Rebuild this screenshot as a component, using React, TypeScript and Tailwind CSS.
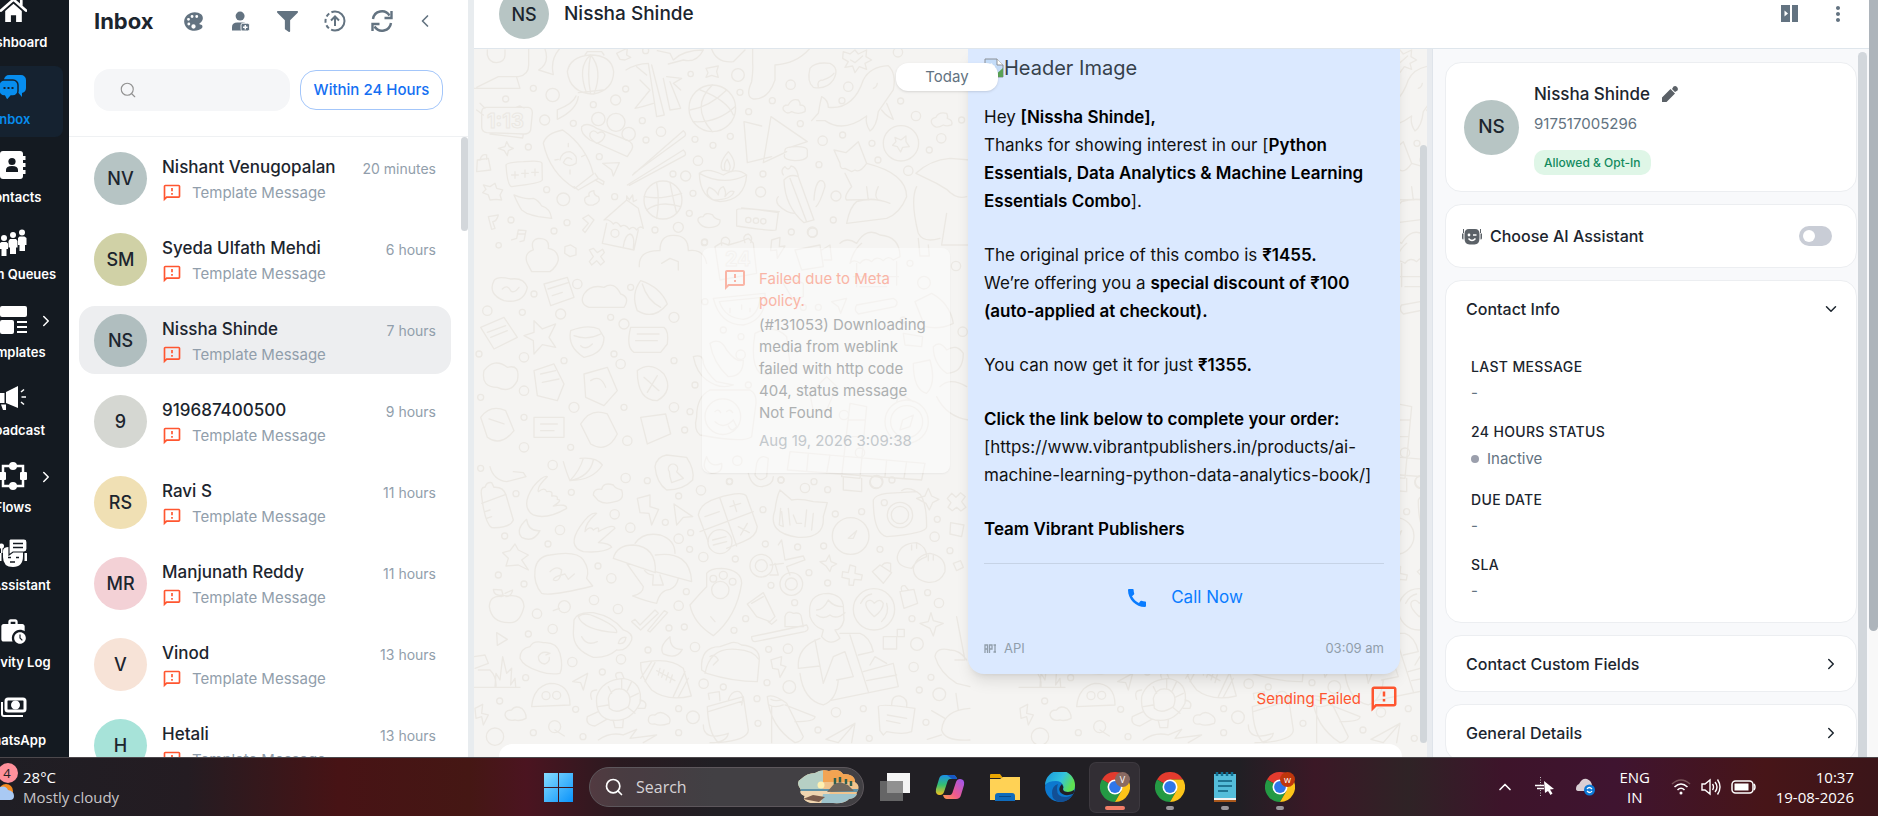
import { useState } from 'react';
import type { ReactNode } from 'react';
import { FaFilter } from 'react-icons/fa';
import { MdCall, MdOutlineFeedback, MdWorkHistory, MdMoreVert } from 'react-icons/md';
import { IoColorPalette } from 'react-icons/io5';
import { ChevronDown, ChevronLeft, ChevronRight, ChevronUp, Search } from 'lucide-react';

type Chat = { name: string; initials: string; time: string; color: string };

const chats: Chat[] = [
  { name: 'Nishant Venugopalan', initials: 'NV', time: '20 minutes', color: 'bg-[#b6c4c4]' },
  { name: 'Syeda Ulfath Mehdi', initials: 'SM', time: '6 hours', color: 'bg-[#d0d1a6]' },
  { name: 'Nissha Shinde', initials: 'NS', time: '7 hours', color: 'bg-[#b0bebf]' },
  { name: '919687400500', initials: '9', time: '9 hours', color: 'bg-[#d5d7d2]' },
  { name: 'Ravi S', initials: 'RS', time: '11 hours', color: 'bg-[#f0e0b4]' },
  { name: 'Manjunath Reddy', initials: 'MR', time: '11 hours', color: 'bg-[#f3d1d6]' },
  { name: 'Vinod', initials: 'V', time: '13 hours', color: 'bg-[#f7e3d7]' },
  { name: 'Hetali', initials: 'H', time: '13 hours', color: 'bg-[#a7e3d9]' },
];

const HomeIcon = () => (
  <svg viewBox="0 0 26 26" className="w-[27px] h-[27px]" fill="currentColor">
    <path d="M5 13.500 13 6.500l8 7V24h-5.500v-6.500h-5V24H5z" />
    <path d="M1 13 13 2.500 25 13M20.500 3.500v5" fill="none" stroke="currentColor" strokeWidth="2.600" strokeLinecap="round" />
  </svg>
);

const ChatIcon = () => (
  <svg viewBox="0 0 28 28" className="w-[28px] h-[28px]" fill="currentColor">
    <path d="M10 1h12a5 5 0 0 1 5 5v8a5 5 0 0 1-4 4.900V23l-3.500-4H10a5 5 0 0 1-5-5V6a5 5 0 0 1 5-5z" />
    <path d="M5 6h9a5 5 0 0 1 5 5v6a5 5 0 0 1-5 5h-2l-4 4.500L5.500 22H5a5 5 0 0 1-5-5v-6a5 5 0 0 1 5-5z" stroke="#152230" strokeWidth="1.500" />
    <path d="M4.500 13h2v2h-2zM8.500 13h2v2h-2zM12.500 13h2v2h-2z" fill="#152230" />
  </svg>
);

const ContactsIcon = () => (
  <svg viewBox="0 0 26 28" className="w-[26px] h-[28px]" fill="currentColor">
    <rect x="0" y="0" width="23" height="28" rx="3" />
    <path d="M23 5h2.500v4H23zM23 12h2.500v4H23zM23 19h2.500v4H23z" />
    <circle cx="12" cy="10.500" r="3.600" fill="#141a21" />
    <path d="M6 21v-2q0-4 6-4t6 4v2z" fill="#141a21" />
  </svg>
);

const QueueIcon = () => (
  <svg viewBox="0 0 28 28" className="w-[28px] h-[28px]" fill="currentColor">
    <circle cx="5" cy="9" r="3" /><circle cx="14" cy="6" r="3" /><circle cx="23" cy="3.500" r="3" />
    <path d="M2.500 13h5l1.500 1.500V20H7.500v7h-5v-7H0v-5.500zM11 10h6l1.500 2v6.500H17V25h-6v-6.500H9.500V12zM20.500 7.500h5L27.500 9v7H26v6h-5.500v-6H19V9z" />
  </svg>
);

const TemplateIcon = () => (
  <svg viewBox="0 0 27 28" className="w-[27px] h-[28px]" fill="currentColor">
    <rect width="27" height="11" rx="2" /><rect y="14" width="14" height="14" rx="2" />
    <path d="M17 15h10v2H17zM17 20h10v2H17zM17 25h10v2H17z" />
  </svg>
);

const MegaphoneIcon = () => (
  <svg viewBox="0 0 28 24" className="w-[28px] h-[24px]" fill="currentColor">
    <path d="M7 6 19 0v22L7 17zM0 7h5.500v10H0zM2 18.500h5V24H4z" />
    <path d="m22 6 3-2.500M22.500 11H27M22 16l3 2.500" stroke="currentColor" strokeWidth="1.600" />
  </svg>
);

const FlowIcon = () => (
  <svg viewBox="0 0 28 28" className="w-[28px] h-[28px]" fill="currentColor">
    <rect x="4" y="4" width="20" height="20" fill="none" stroke="currentColor" strokeWidth="2.500" />
    <circle cx="14" cy="4" r="4" /><circle cx="14" cy="24" r="4" />
    <rect x="0" y="10" width="7" height="8" rx="1" /><rect x="21" y="10" width="7" height="8" rx="1" />
  </svg>
);

const AssistantIcon = () => (
  <svg viewBox="0 0 28 28" className="w-[28px] h-[28px]" fill="currentColor">
    <path d="M4 12q0-4 6-4h14v9q0 11-10 11T4 18zM0 14h2.500v8H0zM25.500 14H28v8h-2.500z" />
    <circle cx="2.500" cy="7" r="2.500" /><path d="M2 8h1.500v6H2z" />
    <path d="M11 0h14a3 3 0 0 1 3 3v7a3 3 0 0 1-3 3H14l-4 3V1z" stroke="#141a21" strokeWidth="1.200" />
    <path d="M14 4.500h10M14 8.500h10M9 18.500h3M17 18.500h3M11 23h5" stroke="#141a21" strokeWidth="1.500" />
  </svg>
);

const PaymentsIcon = () => (
  <svg viewBox="0 0 27 22" className="w-[27px] h-[22px]" fill="none" stroke="currentColor" strokeWidth="2">
    <rect x="6" y="2" width="19" height="12" rx="2" strokeWidth="3" /><circle cx="15.500" cy="8" r="3.500" fill="currentColor" />
    <path d="M2 5v12q0 2 2 2h19" />
  </svg>
);

const menu: { label: string; icon: ReactNode; active?: boolean; sub?: boolean }[] = [
  { label: 'Dashboard', icon: <HomeIcon /> },
  { label: 'Inbox', icon: <ChatIcon />, active: true },
  { label: 'Contacts', icon: <ContactsIcon /> },
  { label: 'Team Queues', icon: <QueueIcon /> },
  { label: 'Templates', icon: <TemplateIcon />, sub: true },
  { label: 'Broadcast', icon: <MegaphoneIcon /> },
  { label: 'Flows', icon: <FlowIcon />, sub: true },
  { label: 'AI Assistant', icon: <AssistantIcon /> },
  { label: 'Activity Log', icon: <MdWorkHistory className="w-[28px] h-[28px]" /> },
  { label: 'WhatsApp', icon: <PaymentsIcon /> },
];

const Sidebar = () => (
  <aside className="flex justify-end w-[69px] shrink-0 overflow-hidden bg-[#141a21] pr-1.5">
    <nav className="flex flex-col gap-1.5 w-[100px] h-[770px] shrink-0 -mt-3">
      {menu.map((item) => (
        <a
          key={item.label}
          href="#"
          className={`relative flex flex-1 flex-col items-center justify-between rounded-lg pt-1.5 pb-2 ${
            item.active ? 'bg-[#152230] text-[#078dee]' : 'text-white'
          }`}
        >
          <span className="flex items-center h-8">{item.icon}</span>
          <span className="text-[13px] leading-5 font-semibold whitespace-nowrap">{item.label}</span>
          {item.sub && <ChevronRight className="absolute right-2 top-3.5 w-[18px] h-[18px]" />}
        </a>
      ))}
    </nav>
  </aside>
);

const UserAddIcon = () => (
  <svg viewBox="0 0 20 22" className="w-[18px] h-[21px]" fill="currentColor">
    <circle cx="9" cy="5" r="5" /><path d="M0 21v-4q0-5 6-5h6q5 0 6 4v5z" />
    <rect x="10" y="13" width="9.500" height="8.500" rx="2" stroke="#fff" />
    <path d="M14.750 14.800v5M12.250 17.300h5" stroke="#fff" strokeWidth="1.600" />
  </svg>
);

const UploadIcon = () => (
  <svg viewBox="0 0 22 22" className="w-[22px] h-[22px]" fill="none" stroke="currentColor" strokeWidth="2">
    <path d="M11 1.500a9.500 9.500 0 0 1 0 19" /><path d="M11 20.500a9.500 9.500 0 0 1 0-19" strokeDasharray="4 2.500" />
    <path d="M11 16V6.500M7 10.500l4-4 4 4" />
  </svg>
);

const RefreshIcon = () => (
  <svg viewBox="0 0 22 22" className="w-[22px] h-[22px]" fill="none" stroke="currentColor" strokeWidth="2.400">
    <path d="M2 9a9 9 0 0 1 16.500-3.500M20 13A9 9 0 0 1 3.500 16.500" />
    <path d="M20.500 1v7h-7M1.500 21v-7h7" />
  </svg>
);

const tools = [
  { label: 'Theme', icon: <IoColorPalette className="w-[23px] h-[23px]" /> },
  { label: 'Assign', icon: <UserAddIcon /> },
  { label: 'Filter', icon: <FaFilter className="w-[21px] h-[21px]" /> },
  { label: 'Upload', icon: <UploadIcon /> },
  { label: 'Refresh', icon: <RefreshIcon /> },
];

const InboxPanel = ({ selected, onSelect }: { selected: string; onSelect: (name: string) => void }) => (
  <section className="flex flex-col w-[399px] shrink-0 bg-white">
    <div className="h-[137px] shrink-0 border-b border-[#eff1f3]">
      <div className="flex items-center h-[42px] pl-[25px] text-[#637381]">
        <h1 className="text-[22px] leading-7 font-bold text-[#1c252e] w-[76px]">Inbox</h1>
        {tools.map((tool) => (
          <button key={tool.label} aria-label={tool.label} className="flex justify-center w-[47px]">{tool.icon}</button>
        ))}
        <button aria-label="Collapse" className="flex justify-center w-10"><ChevronLeft className="w-[20px] h-[20px]" /></button>
      </div>
      <div className="flex items-center gap-2.5 pl-[25px] pr-[25px] pt-[27px]">
        <label className="flex flex-1 min-w-0 items-center h-[42px] rounded-2xl bg-[#f5f6f8] pl-[25px] text-[#919191]">
          <Search className="w-[18px] h-[18px] shrink-0" strokeWidth={1.5} />
          <input aria-label="Search chats" className="w-full min-w-0 bg-transparent outline-none px-2" />
        </label>
        <button className="h-10 w-[143px] rounded-2xl border border-[#a3c6fa] text-[15px] font-medium text-[#146ff2]">
          Within 24 Hours
        </button>
      </div>
    </div>
    <div className="flex flex-1 min-h-0 justify-between">
      <ul className="flex flex-col gap-[13px] flex-1 min-w-0 overflow-hidden pt-[7px] pl-2.5 pr-2.5">
        {chats.map((chat) => (
          <li key={chat.name} className="shrink-0">
            <button
              onClick={() => onSelect(chat.name)}
              className={`flex items-center w-full h-[68px] rounded-2xl px-[15px] text-left ${
                chat.name === selected ? 'bg-[#edeef0]' : ''
              }`}
            >
              <span
                className={`flex items-center justify-center w-[53px] h-[53px] shrink-0 rounded-full text-[18px] font-medium text-[#1c252e] ${chat.color}`}
              >
                {chat.initials}
              </span>
              <span className="flex flex-col flex-1 ml-[15px] pt-1 gap-0.5 min-w-0">
                <span className="flex items-center justify-between">
                  <span className="text-[17px] leading-6 font-medium text-[#1c252e]">{chat.name}</span>
                  <span className="text-[14px] leading-5 pt-1 text-[#919eab]">{chat.time}</span>
                </span>
                <span className="flex items-center gap-2.5 text-[15px] leading-6 text-[#919eab]">
                  <MdOutlineFeedback className="w-5 h-5 text-[#ff5630]" />
                  Template Message
                </span>
              </span>
            </button>
          </li>
        ))}
      </ul>
      <div className="w-[7px] h-[94px] rounded-full bg-[#d3d7db]" />
    </div>
  </section>
);

const dots1 = [
  [248, 285, 20], [190, 265, 9], [107, 297, 9], [437, 300, 15], [467, 267, 9], [370, 314, 9], [224, 360, 15], [310, 370, 9],
  [527, 152, 9], [662, 222, 8], [804, 225, 19], [810, 277, 9], [836, 335, 9], [907, 302, 9], [962, 254, 14], [1135, 260, 14],
  [1284, 157, 14], [1116, 302, 9], [1292, 303, 9], [1338, 348, 14], [991, 371, 9], [1058, 422, 14], [1118, 405, 9],
  [1206, 430, 9], [1414, 415, 14], [1378, 450, 9], [1475, 360, 9], [573, 395, 14], [528, 420, 9], [517, 362, 9], [675, 418, 9],
  [729, 436, 9], [781, 409, 9], [684, 482, 14], [388, 470, 9], [175, 441, 9], [609, 522, 9], [647, 528, 15], [669, 580, 9],
  [879, 522, 9], [872, 576, 15], [1047, 494, 9], [1098, 588, 15], [1224, 480, 9], [1315, 512, 14], [1090, 660, 9],
  [434, 590, 9], [280, 598, 19], [230, 569, 9], [123, 660, 9], [291, 668, 9], [252, 693, 9], [555, 690, 9], [625, 682, 15],
  [658, 640, 9], [964, 696, 9], [1027, 696, 15], [86, 736, 8], [704, 726, 9], [727, 325, 70], [579, 600, 57], [1293, 430, 53],
  [385, 357, 20], [438, 367, 27], [476, 402, 20], [435, 700, 12], [835, 660, 8], [858, 662, 8], [880, 664, 8],
];

const shapes1 = [
  'M12 265H150L140 232M176 147V195Q176 225 145 230H85L20 262M52 150V165Q58 188 80 188Q105 185 105 165V150',
  'M225 147Q240 190 206 210L250 224Q240 180 268 147',
  'M292 215Q300 170 360 165Q425 165 431 215Q430 270 370 282Q300 280 292 215ZM362 165Q320 200 350 280M362 165Q350 220 362 282M362 165Q400 210 372 282M345 165L352 155H395L402 165M325 278L400 270M325 290Q320 330 262 358Q262 345 262 330Q310 310 318 288',
  'M440 160L460 150 472 145 470 165 482 172 465 180 450 178ZM562 152L600 160 610 180Q640 150 700 150Q680 190 640 180L595 192',
  'M725 147Q740 190 790 185L825 150M848 147V190Q850 210 845 245Q825 290 850 297Q895 300 915 240V195Q980 190 1018 147',
  'M468 210Q500 190 535 190L560 350 583 345 545 195M500 200L530 225M510 240L540 270L495 325Q520 320 550 310M590 230L635 235 610 250 632 270M580 235L600 330 632 325 600 245',
  'M708 205L745 198 740 215 745 232 725 226 708 232 714 218Z',
  'M727 255Q660 320 727 395M690 270Q770 300 790 345M660 330Q720 320 770 270M670 365Q740 370 795 320',
  'M48 322H175Q188 325 187 340L182 390Q178 403 160 402L50 398Q35 395 35 380V335Q37 322 48 322ZM60 402L158 414 160 402M20 330L40 345M30 310L45 325M137 322L150 318 162 324',
  'M335 380Q350 365 380 385L470 420Q495 430 485 450L472 470 360 420Q330 400 335 380ZM380 430Q355 415 360 400Q370 385 383 400Q400 390 405 405Q400 425 380 430Z',
  'M220 430Q228 400 278 390Q350 440 370 522L315 565Q240 520 220 430ZM312 560L325 570 385 535 375 520M375 540L400 554 402 545 385 535',
  'M472 555L640 450Q650 460 645 466L478 556M488 525L640 392Q650 400 645 408L492 520',
  'M270 480Q275 455 300 455Q325 465 318 490Q295 505 280 488Q290 465 305 478M295 440V430M335 470L345 465M255 480L265 478M300 510V522',
  'M688 520Q690 598 750 605Q825 600 830 525Q760 560 688 520Q710 500 760 525Q800 500 830 525M757 510Q745 490 775 455Q805 490 785 515ZM765 510Q760 490 772 478Q785 500 778 510M730 600Q700 580 718 562Q735 568 745 585Q745 565 760 560Q770 575 765 590Q780 568 792 575Q785 600 730 600Z',
  'M822 365L875 378M822 365L832 488 905 470M903 350L880 488Q920 470 950 455M903 350L1012 425 960 442M945 450Q945 440 980 440Q1012 440 1012 450V470Q1005 482 975 482Q945 480 943 470Z',
  'M942 540Q960 520 985 530L1032 660 1002 668Q945 620 942 540ZM960 535L1010 665M1032 600Q1035 550 1050 542Q1065 540 1065 560Q1050 610 1038 620M925 590Q915 600 925 615Q950 640 975 640M940 525Q930 510 945 500Q955 515 963 498Q980 500 985 528',
  'M1025 362L1045 340Q1050 310 1055 290Q1075 300 1075 322Q1150 330 1180 240Q1200 200 1255 197Q1280 220 1270 270L1225 335Q1220 380 1200 393Q1185 370 1190 348Q1120 400 1065 362L1040 362M1250 310L1270 358Q1250 350 1235 330M1210 265Q1220 262 1222 250',
  'M1092 450L1128 458 1165 425 1190 490Q1170 520 1155 510L1145 515 1125 505Q1110 510 1110 490ZM1125 520L1145 560Q1120 590 1130 600L1215 598M1190 490Q1310 520 1310 590Q1290 640 1250 655L1130 670Q1140 620 1160 605Q1210 590 1260 610M1190 560L1195 600M1225 560Q1210 590 1225 600',
  'M1020 205Q1035 185 1080 190Q1110 205 1090 240Q1070 270 1030 262Q1010 245 1020 205ZM1045 260Q1040 240 1060 240Q1085 230 1092 220',
  'M1120 155L1140 162 1155 150 1165 162 1190 150 1188 170 1205 180 1185 190 1190 208 1168 200 1155 218 1148 198 1125 202 1135 185 1118 175ZM1142 180L1155 188 1178 168',
  'M1275 412L1293 420 1308 408 1308 425 1318 440 1298 442 1292 456 1282 440 1268 436 1278 425Z',
  'M940 330Q935 315 955 315Q965 295 985 300Q992 310 990 315Q1010 315 1005 335Q985 345 965 335Q950 345 940 330ZM1385 370Q1380 355 1398 352Q1405 335 1430 340Q1435 350 1432 355Q1450 360 1445 375Q1430 380 1420 375Q1395 390 1385 370Z',
  'M108 495Q108 488 160 485Q215 480 216 490L217 540Q215 550 125 560Q112 558 108 495ZM125 525H145M135 515V535M155 520H175M165 510V532M185 517H205M195 507V527',
  'M85 445L105 440 110 425 118 440 130 445 115 452 112 467 103 452ZM22 480L55 475 62 510 20 515ZM30 480Q35 460 50 465V478M398 490L448 488 430 528 425 510Z',
  'M40 555L60 560 75 550 80 565 98 570 90 585 95 600 78 598 60 600 55 585 38 578 48 568ZM132 585Q145 615 155 630L170 640 185 645 205 650 245 655Q240 625 215 618Q205 600 190 595Q165 600 132 585ZM345 605Q340 590 358 588Q352 575 372 572Q370 585 385 590Q395 605 370 615Q350 618 345 605Z',
  'M402 660L470 600 505 625 520 685Q510 675 500 690Q490 675 478 688Q465 670 452 680Q440 660 430 672Q415 655 402 660ZM410 670L397 730 492 750 505 690M460 740Q465 705 480 702Q495 705 490 745M470 600V588L478 600 488 585 490 605 500 600',
  'M523 590Q570 600 635 580M560 548Q570 600 560 655M600 547Q610 600 620 640M530 630Q570 600 632 620',
  'M800 630Q805 620 925 638L918 690Q910 695 800 678ZM815 624L928 635M685 665Q680 650 700 650Q705 635 728 645Q732 655 750 660Q752 675 735 680Q700 690 685 665Z',
  'M55 650L85 645Q80 665 68 665L75 685 65 688ZM338 655L355 645 372 660 345 698 338 690 355 670ZM125 720L140 715 145 690 168 692 162 722 150 725M142 702H165',
  'M285 740L302 735 318 745V765L300 770 284 760ZM358 750L370 745 382 758 398 748 403 758 392 770 403 785 392 795 380 782 365 795 358 785 370 770ZM172 790Q160 760 190 750Q180 720 205 715Q240 715 235 745Q265 750 265 780Q260 800 240 815H185Z',
  'M508 800Q505 750 570 752Q570 705 610 706Q655 705 655 752Q700 745 710 790M575 790L600 775 625 785V810',
  'M1338 520Q1380 480 1440 475L1500 480M1338 520L1400 550 1430 568Q1460 600 1490 590M1340 560Q1320 600 1345 700Q1360 730 1410 715M1430 640L1415 735H1500M1345 715L1350 768H1378L1375 735',
];

const shapesMid = [
  'M60 20Q40 60 90 80Q150 90 160 40Q150 10 110 15Q70 5 60 20ZM85 45Q100 30 110 50Q120 60 135 40',
  'M210 30L280 10 300 70 230 95ZM222 45L285 25M235 65L265 55',
  'M330 60Q350 30 390 40Q420 20 440 60Q470 70 450 100H345Q315 90 330 60Z',
  'M500 20Q560 40 580 90Q540 140 490 110Q470 60 500 20ZM505 30Q520 80 560 100',
  'M20 160L90 130 130 190 60 225ZM40 175L95 155M50 190L100 170',
  'M180 140L205 165 245 150 225 190 245 220 205 212 180 240 178 200 150 185 180 175Z',
  'M290 170Q280 220 330 250Q390 240 390 190L375 165Q340 150 290 170ZM300 185Q340 200 380 180M320 215Q335 230 355 210',
  'M470 160H570Q585 170 580 210L560 235H480Q455 220 470 160ZM490 180H555M485 200H550',
  'M30 290Q60 250 100 280Q140 270 130 320Q110 360 70 340Q20 340 30 290Z',
  'M180 290L240 270 270 330 250 380 190 365ZM200 300L245 290M205 325L255 315',
  'M330 300L400 280 430 350 390 395 335 370ZM350 320Q380 300 395 340',
  'M490 290Q530 260 570 300Q600 350 550 380Q490 380 490 290ZM510 310L555 350M550 305L520 355',
  'M20 430Q50 390 95 410L120 470Q80 520 40 490ZM45 435L90 450M180 430H270V490H180ZM200 450H250M200 470H240',
  'M320 450Q350 400 400 420L430 480Q400 540 350 510ZM500 430L575 420 590 480 520 510Z',
];

const dotsMid = [
  [180, 60, 9], [310, 30, 14], [470, 40, 9], [40, 110, 14], [145, 115, 9], [260, 120, 15], [410, 130, 9], [450, 150, 15],
  [15, 240, 9], [150, 250, 14], [270, 260, 9], [420, 240, 9], [440, 270, 14], [600, 260, 9], [150, 350, 14], [20, 370, 9],
  [300, 400, 15], [450, 400, 9], [600, 400, 14], [150, 430, 9], [150, 520, 14], [290, 520, 9], [460, 500, 14], [600, 130, 15],
];

const shapesCard = [
  'M105 50L125 38 145 45 180 35 205 25 220 40 230 130 120 150ZM125 45Q120 20 140 22Q155 30 145 45M195 38Q185 15 205 12Q220 20 212 38',
  'M275 30L300 22 298 50 315 48 292 85 290 60 272 62ZM345 60L420 45 430 110 365 120ZM425 60L450 45 455 90 432 90M480 40Q500 20 530 40Q560 -10 600 15Q660 20 660 80L640 90Q625 75 610 92Q590 75 575 95Q555 80 540 100Q520 85 510 100Q520 60 545 40M530 100V170M650 95V165M520 140H655M540 170H620',
  'M100 205L255 190Q260 270 190 285Q120 285 100 205ZM118 215L240 203Q235 262 190 268Q135 265 118 215ZM150 235V248M185 225V238M210 235V245M455 215L500 205 482 250 475 230Z',
  'M530 225L640 205Q660 215 645 230L535 252Q520 240 530 225ZM705 215L755 190Q810 220 820 280Q780 300 735 290ZM310 160Q330 140 370 160V200L340 210Z',
  'M40 380Q70 370 70 400Q80 430 110 455L160 465Q120 480 80 450Q50 430 40 380ZM90 340Q120 320 140 360Q170 400 190 390Q190 440 145 440Q100 400 90 340ZM225 310Q280 280 320 320L330 400Q300 440 240 430Q210 400 225 310ZM670 310L728 320 725 350 675 345Z',
  'M90 480H210Q230 490 228 520L215 620Q190 640 60 615Q40 600 50 560Q50 500 90 480ZM75 560A50 50 0 1 0 182 560A50 50 0 1 0 75 560ZM105 545Q115 535 122 548M140 545Q150 535 158 548M105 575Q130 600 160 570L170 590Q155 610 145 588',
  'M330 665L735 700 725 750 322 720ZM385 670L380 725M450 675L440 730M510 520L560 530 540 745 485 740ZM505 570H555M500 620H550M490 740V780L545 785V745M620 690L615 740M680 695L672 745',
  'M390 490L440 440 470 470 440 540 400 545ZM615 575A65 65 0 1 0 745 575A65 65 0 1 0 615 575ZM632 575A48 48 0 1 0 728 575A48 48 0 1 0 632 575ZM700 555L690 590 660 600 668 570ZM650 515Q655 495 675 500L700 515',
  'M760 350Q780 330 800 360Q830 340 850 370Q850 430 800 430Q760 400 760 350ZM700 400L750 390Q770 460 740 490Q700 480 700 400ZM780 470Q810 440 860 470M770 500Q800 560 865 570M80 680Q60 720 95 730Q130 730 125 700Q90 715 80 680ZM230 700Q240 670 265 685L260 740Q240 760 225 735ZM205 730Q215 770 245 770Q280 765 280 740',
];

const dotsCard = [
  [73, 38, 9], [398, 8, 14], [828, 108, 14], [690, 100, 9], [732, 158, 19], [670, 270, 9], [75, 215, 9], [130, 300, 9],
  [183, 320, 9], [182, 374, 14], [45, 465, 9], [205, 465, 9], [14, 600, 9], [30, 545, 9], [492, 555, 14], [540, 668, 14],
  [172, 692, 14], [303, 750, 9], [402, 755, 9], [590, 755, 19], [148, 755, 9], [848, 305, 14], [370, 232, 9], [415, 232, 9],
];

const dots3 = [
  [248, 15, 14], [32, 25, 9], [467, 54, 14], [532, 62, 9], [138, 101, 9], [304, 97, 9], [626, 108, 9], [693, 91, 14],
  [779, 64, 9], [933, 60, 9], [1005, 84, 14], [1073, 89, 9], [1218, 67, 19], [1266, 60, 9], [434, 163, 14], [586, 187, 9],
  [481, 203, 14], [270, 210, 14], [104, 228, 9], [234, 252, 9], [626, 236, 14], [662, 218, 9], [659, 268, 9], [700, 291, 14],
  [796, 297, 9], [879, 149, 9], [886, 252, 9], [983, 261, 9], [1096, 162, 9], [1175, 155, 9], [1243, 128, 9], [1402, 178, 9],
  [1394, 230, 14], [1061, 258, 9], [1230, 268, 9], [1440, 272, 9], [1017, 338, 9], [1073, 369, 9], [903, 376, 9],
  [384, 318, 9], [424, 355, 14], [162, 372, 9], [85, 345, 9], [372, 420, 14], [444, 447, 14], [283, 440, 18], [201, 461, 14],
  [626, 437, 14], [649, 395, 9], [597, 504, 9], [643, 501, 9], [792, 511, 9], [827, 476, 9], [974, 428, 9], [1373, 398, 9],
  [1407, 429, 14], [1326, 476, 9], [248, 507, 14], [175, 522, 9], [534, 570, 9], [675, 561, 14], [307, 606, 14],
  [453, 598, 14], [397, 636, 9], [167, 653, 9], [896, 568, 9], [954, 566, 14], [891, 668, 9], [958, 681, 19], [1341, 552, 19],
  [1331, 621, 14], [1383, 652, 9], [1348, 690, 9], [1408, 703, 19], [701, 671, 14], [760, 681, 9], [89, 723, 9],
  [317, 748, 9], [626, 746, 9], [669, 772, 19], [861, 716, 9], [864, 790, 9], [1098, 757, 14], [1180, 746, 9], [1044, 810, 9],
  [1368, 787, 9], [190, 818, 9], [339, 830, 9], [254, 800, 18], [626, 818, 9], [75, 830, 26], [1198, 835, 9],
  [1290, 165, 38], [1290, 165, 26], [1142, 228, 55], [1212, 448, 62], [874, 317, 34], [874, 317, 18], [964, 372, 34],
  [964, 372, 18], [751, 390, 26], [730, 356, 10], [760, 346, 12], [788, 365, 10], [228, 707, 12], [260, 706, 12], [750, 245, 36],
];

const shapes3 = [
  'M60 20Q70 60 110 65L168 50 160 38 130 35M280 5Q290 40 300 62Q370 60 397 15Q380 -10 330 -5M300 62Q330 30 340 -5M300 62Q360 50 370 0',
  'M555 20Q560 -10 590 -15L650 -8Q675 30 668 60Q640 90 590 90Q560 70 555 20ZM600 50L598 35A14 14 0 1 1 620 35L640 55 605 68Z',
  'M35 110Q30 80 45 82Q50 65 65 68L72 82Q100 80 108 105L130 180Q120 205 65 203Q45 190 35 110ZM35 130L108 103M45 155L60 150M50 175L65 170',
  'M232 50Q220 45 190 80Q150 140 190 165Q230 180 290 145Q290 130 250 138Q280 120 262 118Q265 105 245 108Q250 90 230 95Q225 80 205 95Q200 80 232 50Z',
  'M380 160Q360 155 330 200Q290 260 340 275Q400 280 425 262Q420 250 385 248L435 205Q430 190 385 215Q390 195 370 210Q360 195 345 215Q345 190 380 160Z',
  'M370 105Q370 85 395 88Q400 65 430 75Q435 85 455 90Q465 120 435 125Q405 135 385 122ZM105 765Q105 750 125 750Q135 735 155 745Q170 760 168 775Q150 785 135 780Q110 785 105 765ZM535 780Q535 762 555 765Q570 750 590 765Q605 775 598 790Q570 800 555 792Q535 795 535 780Z',
  'M502 115L540 105 540 140 566 148 545 195 537 160 510 158ZM612 132L668 170 640 172 620 195ZM903 600L935 590 932 615 948 620 930 652 925 628 908 625ZM15 745L38 733 35 760 55 765 40 795 35 770 18 775Z',
  'M170 178Q135 210 155 232Q190 250 210 212Q175 215 170 178ZM600 530Q565 560 580 582Q620 600 637 568Q600 570 600 530Z',
  'M98 278L120 272 135 252 145 270 175 285 155 300 175 330 145 315 108 318 115 295ZM80 518L112 538 82 556Z',
  'M195 330Q200 290 240 285Q320 270 340 300Q360 330 350 355L368 378Q240 410 215 400Q190 370 195 330ZM240 335Q260 315 275 330Q270 370 250 360Q250 350 285 342L295 358 313 342',
  'M430 295Q440 255 490 255Q560 260 556 338ZM495 250Q520 215 570 225Q615 240 615 280M556 285Q660 270 665 365L556 335M470 310L520 380Q520 400 488 408Q530 425 560 430Q570 390 600 388Q620 380 625 355M520 325Q530 345 550 345L548 375 580 375 570 345',
  'M685 165Q690 130 740 115Q820 90 830 110L862 200Q860 230 820 245L770 265M685 165L715 245M750 115L800 258M690 215L850 155M705 170L748 155M780 140L812 130M790 122L800 155M805 200L838 218M812 225L832 190M728 240L768 230M730 255L770 245',
  'M930 90Q920 110 915 150Q890 220 985 232Q1065 235 1060 170L1072 128 1030 125Q990 115 965 120ZM932 145L928 195 940 200 935 155M955 145L960 195M1010 150L1005 200M1030 160L1025 210M970 165L980 190H995',
  'M1210 120Q1215 105 1250 100L1340 95Q1370 110 1370 200Q1370 220 1250 230Q1210 220 1210 120ZM1295 92Q1310 80 1335 92M1340 115L1365 108 1375 85 1385 108 1407 118 1388 128 1378 150 1368 130Z',
  'M1432 115L1445 100 1458 112 1472 98 1486 110 1475 125 1488 142 1473 153 1460 142 1447 152 1434 142 1443 128ZM1118 335L1135 338 1140 315 1157 320 1155 340 1177 345 1174 360 1153 358 1150 376 1137 375 1138 357 1116 352Z',
  'M925 255L935 240 945 300 1000 288 1005 300 950 320 960 345M915 310L925 345 900 345M1050 305L1068 303 1078 285 1083 305 1100 312 1085 320 1080 335 1068 318Z',
  'M1282 290Q1290 250 1340 248Q1370 260 1370 290Q1340 300 1325 325Q1280 320 1282 290ZM1330 325Q1340 285 1380 280Q1430 290 1425 335Q1410 370 1375 367Q1330 360 1330 325ZM1325 255V270M1340 250V265M1375 285V302M1390 285V300',
  'M660 435Q690 400 710 380V340Q720 325 755 325Q815 330 815 370Q800 470 730 527Q670 490 660 435ZM735 485L722 470M832 432L880 398 915 470 900 485 860 470ZM845 430L880 410M895 485L905 493 920 480',
  'M845 530L1010 495Q1020 510 1005 515L855 545Q845 545 845 530ZM945 500V470Q950 450 970 460Q995 455 995 475L1000 500Z',
  'M58 440Q60 405 95 410Q100 405 110 408Q160 400 162 440Q150 490 120 488Q65 490 58 440ZM100 408L95 390 70 388Q72 410 98 405M105 400L128 390Q125 408 108 410',
  'M312 480Q320 455 370 458Q430 470 460 510Q490 520 485 540Q470 575 440 570Q410 595 370 592Q310 570 310 520ZM325 470Q340 510 440 518Q445 500 375 470Q345 455 325 470ZM445 550Q450 530 468 532Q465 555 445 550ZM335 530Q350 560 382 545',
  'M485 485L495 478 510 495 555 450 565 460 512 510ZM533 512L583 452 593 458 540 516Z',
  'M150 595Q150 565 180 560Q190 540 220 548Q260 545 270 580Q280 620 270 640Q240 645 210 635Q160 620 150 595ZM240 580Q215 570 205 590Q205 610 225 612Q240 605 238 592M228 585L240 580',
  'M12 682H150M75 680L78 640 90 660 98 590 110 640 125 625 122 675 135 655 137 680M12 590L45 585 55 610 15 625M25 630H60Q80 650 78 680',
  'M185 740Q190 680 240 670Q300 670 300 735ZM308 665L353 640 340 690 332 668Z',
  'M512 608Q600 590 640 625L664 708Q590 725 545 690Q510 650 512 608ZM512 655L545 605M525 665L555 608M610 710L645 635M625 712L655 655M560 632L615 662M570 625L565 645M582 630L575 652M595 638L588 660M607 645L600 668',
  'M695 630Q690 560 750 560L785 548Q800 545 815 555Q870 560 868 600L862 665Q790 665 710 640ZM705 640Q720 560 800 568Q850 570 868 600M720 590Q735 580 745 600L730 615',
  'M1020 470Q1010 400 1075 400Q1115 405 1120 435L1122 480Q1115 510 1095 510L1110 535Q1080 560 1055 530L1060 510Q1030 500 1020 470ZM1040 450Q1060 450 1075 420Q1090 440 1118 440M1040 465Q1060 480 1080 465Q1100 480 1125 458M985 625Q980 560 1050 535M1035 540L1060 670 1090 590 1125 575 1150 650 1100 660M1110 520H1170Q1200 530 1210 575L1165 585M1140 525L1195 695M985 625L1050 618M990 640Q1000 720 1060 735Q1100 720 1105 660M1080 722L1285 680 1270 610 1180 635M1200 615L1215 590 1250 610M1190 662L1280 645',
  'M1213 470Q1180 440 1190 425Q1202 415 1213 430Q1230 412 1240 430Q1240 450 1213 470ZM1172 430Q1185 405 1205 402M1250 430Q1260 460 1235 485M1290 395L1332 388 1343 430 1302 445ZM1295 393Q1290 375 1305 377L1315 390M1207 335L1230 315 1265 338 1240 370ZM1237 315Q1245 305 1262 310V332',
  'M1240 530H1280V567H1240ZM1282 508H1303V530H1282ZM1350 490L1375 485 1383 458 1390 482 1420 490 1398 500 1390 528 1380 505ZM1442 188L1482 195 1475 230 1440 222ZM1450 310L1472 302 1480 322 1460 332Z',
  'M380 710Q395 660 460 655Q520 665 510 730Q480 790 420 780Q375 770 380 710ZM415 715Q425 680 460 688Q490 705 475 740Q440 765 418 745ZM440 655Q430 635 455 638L462 655M510 720Q535 725 525 745L505 745M380 690Q355 690 365 718M410 778L375 798Q345 795 352 770L385 755M430 783L435 803H458L460 780M415 680L425 700M455 658V686M485 665L472 692M505 700L480 712M495 760L473 742M385 740L415 735',
  'M712 740L820 710 835 810Q835 840 745 848Q715 820 712 740ZM715 755L822 722M718 718L715 700 748 695 750 722M775 720Q785 690 808 695Q825 705 815 735M700 795Q700 845 775 820Q770 848 720 848',
  'M892 710Q910 700 950 730L1000 830Q995 845 975 848Q900 800 892 710ZM905 740L905 848M945 735L1035 770Q1035 785 975 785M903 718Q915 725 935 720M898 735Q915 745 940 735',
  'M1225 740Q1230 730 1335 745L1325 815Q1300 825 1250 815L1240 825 1230 812ZM1265 735Q1265 705 1290 708Q1315 715 1310 742M1252 765L1310 775M1250 782L1290 790M1068 838L1155 790 1145 848M1155 790L1105 848 1068 838',
  'M1395 590Q1400 560 1440 570Q1470 570 1490 600M1395 590Q1410 640 1460 670L1500 680M1500 745Q1420 750 1415 810Q1425 845 1500 840M1458 700L1465 750M1385 752L1425 775M1372 838L1415 825M1460 470L1485 600H1455',
  'M385 840Q420 815 460 825L500 808 480 835 560 825 520 848M255 810L283 828M250 452L268 445M900 315L940 310M1135 235L1160 212 1150 235Z',
];

const DoodleGroup = ({ at, paths, dots }: { at: string; paths: string[]; dots: number[][] }) => (
  <g transform={at}>
    {paths.map((d) => <path key={d} d={d} />)}
    {dots.map(([cx, cy, r]) => <circle key={`${cx}-${cy}-${r}`} cx={cx} cy={cy} r={r} />)}
  </g>
);

const Doodles = () => (
  <svg aria-hidden="true" className="absolute inset-0 w-full h-full" fill="none" stroke="#ebe8e3" strokeWidth="4" strokeLinejoin="round" strokeLinecap="round">
    <defs>
      <g id="doodles">
        <DoodleGroup at="translate(-4 -49) scale(.3333)" paths={shapes1} dots={dots1} />
        <DoodleGroup at="translate(0 225) scale(.3333)" paths={shapesMid} dots={dotsMid} />
        <DoodleGroup at="translate(206 181) scale(.3333)" paths={shapesCard} dots={dotsCard} />
        <DoodleGroup at="translate(-4 411) scale(.3333)" paths={shapes3} dots={dots3} />
      </g>
    </defs>
    <use href="#doodles" />
    <use href="#doodles" x="545" />
    <g strokeWidth="1" fontSize="20" fontWeight="700">
      <text x="13" y="79">1:13</text>
      <text x="251" y="217">24</text>
    </g>
  </svg>
);

const BrokenImage = () => (
  <svg viewBox="0 0 20 20" className="w-5 h-5 shrink-0" fill="none">
    <path d="M1 1h12l6 6v12H1z" fill="#c4dcf8" stroke="#8b9096" />
    <path d="M13 1v6h6" fill="#fff" stroke="#8b9096" />
    <path d="M3 8q0-3 3-2 2-2 3 1 2 0 2 2H3z" fill="#fff" />
    <path d="M9 19 19 10v9z" fill="#5aa255" />
  </svg>
);

const Message = () => (
  <article className="relative w-[432px] rounded-b-2xl bg-[#dbe9ff] px-4 pt-1 pb-4 shadow-lg">
    <div className="flex items-center h-[30px] text-[20px] text-[#36414b]">
      <BrokenImage />
      Header Image
    </div>
    <div className="flex flex-col gap-[26px] pt-5 text-[17px] leading-7 text-[#111]">
      <p>
        Hey <b className="font-semibold text-black">[Nissha Shinde],</b>
        <br />
        Thanks for showing interest in our [<b className="font-semibold text-black">Python Essentials, Data Analytics &amp; Machine Learning Essentials Combo</b>].
      </p>
      <p>
        The original price of this combo is <b className="font-semibold text-black">₹1455.</b>
        <br />
        We’re offering you a <b className="font-semibold text-black">special discount of ₹100 (auto-applied at checkout).</b>
      </p>
      <p>You can now get it for just <b className="font-semibold text-black">₹1355.</b></p>
      <p>
        <b className="font-semibold text-black">Click the link below to complete your order:</b>
        <br />
        [https://www.vibrantpublishers.in/products/ai-
        <br />
        machine-learning-python-data-analytics-book/]
      </p>
      <p><b className="font-semibold text-black">Team Vibrant Publishers</b></p>
    </div>
    <a href="#" className="flex items-center justify-center gap-[22px] mt-5 h-[68px] border-t border-[#c6d3e6] text-[17px] text-[#0a7cff]">
      <MdCall className="w-6 h-6" />
      Call Now
    </a>
    <div className="flex items-center justify-between pt-[7px] text-[13px] leading-5 text-[#919eab]">
      <span className="flex items-center gap-2">
        <svg viewBox="0 0 12 9" className="w-3 h-[9px]" fill="none" stroke="currentColor" strokeWidth="1.300">
          <path d="M1 9V1h2.500v8M1 5h2.500M5.500 9V1H8v4H5.500M9.500 1h2.500M11 1v7M9.500 8h2.500" />
        </svg>
        API
      </span>
      <time>03:09 am</time>
    </div>
    <div className="absolute right-full top-[199px] mr-[18px] flex gap-3 w-[248px] h-[225px] rounded-lg bg-white/45 pl-[21px] pr-4 pt-5 text-[15px] shadow-xs">
      <MdOutlineFeedback className="w-[24px] h-[24px] shrink-0 text-[#f9b5a6]" />
      <div className="leading-[22px] text-[#adb0b1]">
        <p className="text-[#f9b5a6]">Failed due to Meta<br />policy.</p>
        <p className="pt-0.5">(#131053) Downloading media from weblink failed with http code 404, status message Not Found</p>
        <p className="pt-1.5 whitespace-nowrap text-[#c3c8cc]">Aug 19, 2026 3:09:38</p>
      </div>
    </div>
  </article>
);

const ChatBody = () => (
  <div className="relative flex flex-1 min-w-0 overflow-hidden bg-[#f5f4f2]">
    <Doodles />
    <main className="relative flex flex-1 flex-col justify-between">
      <div className="flex flex-col items-end pr-5">
        <Message />
        <p className="flex items-center gap-2 pt-2.5 pr-px text-[15px] text-[#ff5630]">
          Sending Failed
          <MdOutlineFeedback className="w-[30px] h-[30px]" />
        </p>
      </div>
      <div className="absolute top-3.5 left-1/2 -translate-x-1/2 w-[102px] rounded-xl bg-white text-center text-[15px] leading-7 text-[#637381] shadow-sm">
        Today
      </div>
      <div className="h-[13px] ml-[25px] mr-[18px] rounded-t-3xl bg-white" />
    </main>
    <div className="relative w-[7px] pt-24">
      <div className="h-[598px] rounded-full bg-[#d1d6da]" />
    </div>
  </div>
);

const RobotIcon = () => (
  <svg viewBox="0 0 20 17" className="w-5 h-[17px]" fill="#5b6167">
    <path d="M7 1h6q4.500 0 4.500 5v4q0 6.500-5 6.500h-5q-5 0-5-6.500V6Q2.500 1 7 1zM0 5.500h1.500v6Q0 11.500 0 10zM18.500 5.500H20V10q0 1.500-1.500 1.500zM1 1h1v4H1zM18 1h1v4h-1z" />
    <circle cx="7" cy="7" r="1.400" fill="#fff" />
    <path d="M11 7h3.500M6.500 10.500q3.500 4 7 0" stroke="#fff" fill="none" strokeWidth="1.500" />
  </svg>
);

const info = [
  { label: 'LAST MESSAGE', value: '-' },
  { label: '24 HOURS STATUS', value: 'Inactive' },
  { label: 'DUE DATE', value: '-' },
  { label: 'SLA', value: '-' },
];

const card = 'shrink-0 rounded-2xl border border-[#eceef1] bg-white';

const Details = () => {
  const [ai, setAi] = useState(false);
  return (
    <aside className="flex w-[442px] shrink-0 border-l-[5px] border-[#e8ebef] bg-[#f8f9fb]">
      <div className="flex flex-1 min-w-0 flex-col gap-3 overflow-hidden border-l border-[#dfe4ea] pt-[13px] pl-3 pr-px">
        <div className={`${card} flex items-center h-[130px] px-[18px]`}>
          <span className="flex items-center justify-center w-[55px] h-[55px] rounded-full bg-[#b7c5c4] text-[19px] font-medium text-[#1c252e]">NS</span>
          <div className="flex flex-col items-start ml-[15px] text-[#637381]">
            <div className="flex items-center gap-3 text-[17px] leading-7 font-medium text-[#1c252e]">
              Nissha Shinde
              <button aria-label="Edit name">
                <svg viewBox="0 0 16 16" className="w-4 h-4" fill="#5b6167">
                  <path d="M0 16v-4.500l8.500-8.500 4.500 4.500L4.500 16zM10 3l1.500-2.500q2-1 3.500.5t.5 3.500L13 6z" />
                </svg>
              </button>
            </div>
            <span className="mt-1 text-[15px] leading-6">917517005296</span>
            <span className="mt-3.5 rounded-[10px] bg-[#dff6e7] px-2.5 text-[12px] leading-[25px] font-medium text-[#128a5e]">Allowed &amp; Opt-In</span>
          </div>
        </div>
        <label className={`${card} flex items-center h-[64px] pl-4 pr-6 text-[16px] font-medium text-[#1c252e]`}>
          <RobotIcon />
          <span className="ml-2">Choose AI Assistant</span>
          <input type="checkbox" checked={ai} onChange={() => setAi(!ai)} className="peer sr-only" />
          <span className="ml-auto flex items-center w-[33px] h-5 rounded-full bg-[#c9cdd6] px-1 peer-checked:justify-end">
            <span className="w-3 h-3 rounded-full bg-white" />
          </span>
        </label>
        <section className={`${card} h-[343px] pl-5 pr-4`}>
          <button className="flex items-center justify-between w-full h-[56px] text-[16px] font-medium text-[#1c252e]">
            Contact Info
            <ChevronDown className="w-[18px] h-[18px]" />
          </button>
          <dl className="flex flex-col gap-3.5 pt-[18px] pl-[5px]">
            {info.map((row) => (
              <div key={row.label}>
                <dt className="text-[14px] leading-6 font-medium tracking-wide text-[#1c252e]">{row.label}</dt>
                <dd className={`flex items-center gap-2 text-[15px] text-[#637381] ${row.value === '-' ? 'leading-[27px]' : 'leading-[30px]'}`}>
                  {row.value !== '-' && <span className="w-2 h-2 rounded-full bg-[#9b9fac]" />}
                  {row.value}
                </dd>
              </div>
            ))}
          </dl>
        </section>
        {['Contact Custom Fields', 'General Details'].map((title) => (
          <button key={title} className={`${card} flex items-center justify-between h-[57px] pl-5 pr-4 text-[16px] font-medium text-[#1c252e]`}>
            {title}
            <ChevronRight className="w-[18px] h-[18px]" />
          </button>
        ))}
      </div>
      <div className="w-[9px] mt-[3px] mr-0.5 rounded-t-full bg-[#d2d7dc]" />
    </aside>
  );
};

const Conversation = () => (
  <div className="flex flex-1 min-w-0 flex-col border-l-[6px] border-[#e8ecef] bg-white">
    <header className="flex items-center h-[49px] shrink-0 border-b border-[#dfe6ec] pl-[25px] pr-[19px]">
      <span className="flex items-center justify-center w-[50px] h-[50px] shrink-0 -mt-5 rounded-full bg-[#b7c5c4] text-[18px] font-medium text-[#1c252e]">NS</span>
      <h2 className="ml-[15px] mb-5 text-[19px] leading-7 font-medium text-[#1c252e]">Nissha Shinde</h2>
      <div className="ml-auto mb-[21px] flex items-center gap-7 text-[#637381]">
        <button aria-label="Toggle details">
          <svg viewBox="0 0 17 17" className="w-[17px] h-[17px]" fill="currentColor">
            <path d="M0 0h9v17H0zM11 0h6v17h-6z" /><path d="M3.500 5.500v6l3.500-3z" fill="#fff" />
          </svg>
        </button>
        <button aria-label="More"><MdMoreVert className="w-[24px] h-[24px]" /></button>
      </div>
    </header>
    <div className="flex flex-1 min-h-0">
      <ChatBody />
      <Details />
    </div>
  </div>
);

const Chrome = ({ badge, badgeColor }: { badge?: string; badgeColor?: string }) => (
  <svg viewBox="0 0 30 30" className="w-[30px] h-[30px]">
    <path d="M15 15 2 7.500A15 15 0 0 1 28 7.500H15z" fill="#e33b2e" />
    <path d="M15 15 2 7.500A15 15 0 0 0 15 30l6.500-11.250z" fill="#249a44" />
    <path d="M15 15 21.500 18.750 15 30A15 15 0 0 0 28 7.500H15z" fill="#fcc419" />
    <circle cx="15" cy="15" r="7.500" fill="#fff" />
    <circle cx="15" cy="15" r="5.900" fill="#2f76ea" />
    {badge && <circle cx="22.500" cy="7.500" r="7.500" fill={badgeColor} />}
    {badge && <text x="22.500" y="10.500" fontSize="9" textAnchor="middle" fill="#fff">{badge}</text>}
  </svg>
);

const Windows = () => (
  <svg viewBox="0 0 29 29" className="w-[29px] h-[29px]">
    <defs>
      <linearGradient id="win" x1="0" y1="0" x2="1" y2="1">
        <stop offset="0" stopColor="#86dcff" /><stop offset="1" stopColor="#0a93fb" />
      </linearGradient>
    </defs>
    <path d="M0 0h14v14H0zM15 0h14v14H15zM0 15h14v14H0zM15 15h14v14H15z" fill="url(#win)" />
  </svg>
);

const Island = () => (
  <svg viewBox="0 0 62 34" className="w-[62px] h-[34px]">
    <defs>
      <clipPath id="cloud"><path d="M4 20Q-2 12 4 9 10 3 18 3 24-1 32 1 42-2 46 4 58 4 58 12 64 16 60 22 60 28 52 29 48 34 36 33H14Q4 30 8 26 2 24 4 20z" /></clipPath>
    </defs>
    <g clipPath="url(#cloud)">
      <path d="M0 0h62v34H0z" fill="#f1c48d" /><path d="M0 0h26v20H0z" fill="#b6cfc4" /><path d="M26 0h36v12H26z" fill="#f3a452" />
      <circle cx="24" cy="15" r="3.500" fill="#fff0b0" /><path d="M0 19h62v3H0z" fill="#5f93a8" />
      <path d="M0 21h34l-8 13H0z" fill="#efd5b0" /><path d="M26 24h36v10H24z" fill="#9fc4cc" />
      <path d="M30 22 37 14l6-2 8 3 6 6z" fill="#70685f" /><path d="M6 29l10-4 12 2-6 5z" fill="#7b5c4b" />
      <path d="M38 14V8M43 12V7M49 14V9M54 16v-5" stroke="#2f6050" strokeWidth="2.500" />
    </g>
  </svg>
);

const Copilot = () => (
  <svg viewBox="0 0 30 28" className="w-[30px] h-[28px]">
    <defs>
      <linearGradient id="cpa" x1="0" y1="0" x2="0" y2="1"><stop offset="0" stopColor="#1b8fe8" /><stop offset=".5" stopColor="#35c06f" /><stop offset="1" stopColor="#f4c11e" /></linearGradient>
      <linearGradient id="cpb" x1="1" y1="0" x2="0" y2="1"><stop offset="0" stopColor="#9a55f5" /><stop offset=".6" stopColor="#ee5a8c" /><stop offset="1" stopColor="#ff9d4a" /></linearGradient>
    </defs>
    <path d="M9 2h9q3 0 4 4l-7 0q-2 0-3 4l-3 9q-1 3-4 3-5 0-4-6L4 6q1-4 5-4z" fill="url(#cpa)" />
    <path d="M21 26h-9q-3 0-4-4h7q2 0 3-4l3-9q1-3 4-3 5 0 4 6l-3 10q-1 4-5 4z" fill="url(#cpb)" />
    <path d="M12 2h6q3 0 4 4h-5z" fill="#1757c4" />
  </svg>
);

const Folder = () => (
  <svg viewBox="0 0 30 27" className="w-[30px] h-[27px]">
    <path d="M0 1q0-1 1-1h9l3 4H0z" fill="#e8a401" /><path d="M0 5h10l3-2h17v23H0z" fill="#ffd255" />
    <path d="M5 27v-5q0-3 3-3h14q3 0 3 3v5z" fill="#0f6cbd" /><path d="M9 22.500h12" stroke="#0b4a86" />
  </svg>
);

const Edge = () => (
  <svg viewBox="0 0 30 30" className="w-[30px] h-[30px]">
    <defs>
      <linearGradient id="edge" x1="0" y1="0" x2="1" y2=".4"><stop offset="0" stopColor="#1593dc" /><stop offset=".6" stopColor="#33c3df" /><stop offset="1" stopColor="#5fe052" /></linearGradient>
    </defs>
    <circle cx="15" cy="15" r="15" fill="#0c78cf" />
    <path d="M0 13A15 15 0 0 1 30 14q0 6-7 6-5 0-5-3 1-1 0-4-2-4-7-4-8 0-11 4z" fill="url(#edge)" />
    <path d="M12 17q0 9 10 8 3 0 6-3-4 8-13 8-8-1-8-9 0-7 6-9-1 2-1 5z" fill="#124f95" />
    <path d="M17 12q2 3 1 5 0 3 5 3 3 0 6-2 1 1-1 4-9 3-13-2-2-4 2-8z" fill="#211f25" />
  </svg>
);

const Notepad = () => (
  <svg viewBox="0 0 22 30" className="w-[22px] h-[30px]">
    <path d="M0 2h22v25H0z" fill="#54bdda" /><path d="M0 26h22v2H0z" fill="#f2f2f2" /><path d="M0 28h22v2H0z" fill="#a9581c" />
    <path d="M4 9h14M4 14h14M4 19h10" stroke="#0f5f7d" strokeWidth="1.600" />
    <path d="M3 0v4M8 0v4M13 0v4M18 0v4" stroke="#117092" strokeWidth="2.500" />
  </svg>
);

const TaskApp = ({ label, children, open, active }: { label: string; children: ReactNode; open?: boolean; active?: boolean }) => (
  <button
    aria-label={label}
    className={`relative flex items-center justify-center w-[49px] h-[49px] rounded-md ${active ? 'bg-[#322e34] ring-1 ring-[#3d393f]' : ''}`}
  >
    {children}
    {open && <span className={`absolute bottom-0.5 h-1 rounded-full ${active ? 'w-5 bg-[#f27d67]' : 'w-2 bg-[#9a969b]'}`} />}
  </button>
);

const Taskbar = () => (
  <footer className="relative flex items-center justify-center h-[59px] shrink-0 border-t border-[#4c484c] bg-[linear-gradient(90deg,#1f1e24_0%,#241c22_10%,#471315_18%,#451714_25%,#4b1420_28%,#2a1a20_33%,#211f24_38%,#211f24_66%,#3b1826_70%,#2f2326_75%,#3d142a_80%,#3f1430_86%,#471518_94%,#3b1519_100%)] font-['Open_Sans',sans-serif] text-white">
    <div className="absolute left-0 inset-y-0 flex items-center">
      <svg viewBox="0 0 20 40" className="w-5 h-10 -mt-2">
        <circle cx="6" cy="28" r="7" fill="#f58a1f" />
        <path d="M0 24q6-2 8 3 6 1 6 6 0 4-4 4H0z" fill="#a9c9f3" />
        <circle cx="8" cy="10" r="10" fill="#ff919b" />
        <text x="7" y="15" fontSize="13" textAnchor="middle" fill="#222">4</text>
      </svg>
      <p className="pl-[3px] text-[15px] leading-5">
        28°C
        <br />
        <span className="text-[#c8c5c8]">Mostly cloudy</span>
      </p>
    </div>
    <div className="flex items-center gap-1.5 pr-10">
      <TaskApp label="Start"><Windows /></TaskApp>
      <label className="flex items-center w-[275px] h-10 rounded-full border border-[#5d575c] bg-white/15 pl-3.5 pr-1">
        <Search className="w-[20px] h-[20px] shrink-0" />
        <input aria-label="Search" placeholder="Search" className="flex-1 min-w-0 bg-transparent pl-3 text-[16px] outline-none placeholder:text-[#d6d3d6]" />
        <Island />
      </label>
      <TaskApp label="Task view">
        <svg viewBox="0 0 30 28" className="w-[30px] h-[28px]">
          <path d="M7 0h23v20H7z" fill="#f4f4f4" /><path d="M0 8h23v20H0z" fill="#777" fillOpacity=".8" />
        </svg>
      </TaskApp>
      <TaskApp label="Copilot"><Copilot /></TaskApp>
      <TaskApp label="File Explorer"><Folder /></TaskApp>
      <TaskApp label="Edge"><Edge /></TaskApp>
      <TaskApp label="Chrome profile V" open active><Chrome badge="V" badgeColor="#8a6a62" /></TaskApp>
      <TaskApp label="Chrome" open><Chrome /></TaskApp>
      <TaskApp label="Notepad" open><Notepad /></TaskApp>
      <TaskApp label="Chrome profile w" open><Chrome badge="w" badgeColor="#bf360c" /></TaskApp>
    </div>
    <div className="absolute right-6 inset-y-0 flex items-center text-[15px] leading-5">
      <ChevronUp className="w-5 h-5 mr-5" />
      <svg viewBox="0 0 20 20" className="w-5 h-5 mr-5" fill="#fff">
        <path d="M9 4l10 8-4 .5 2.500 4-2 1.500L13 14l-3 2z" /><path d="M0 8.500h9M2 11.500h7" stroke="#fff" strokeWidth="1.500" />
        <path d="M5.500 0v8M5.500 13v7" stroke="#bbb" strokeDasharray="1 1.500" />
      </svg>
      <svg viewBox="0 0 20 18" className="w-5 h-[18px] mr-6" >
        <path d="M1 11Q1 7 4 6 7 0 12 1q5 2 5 7v5H4q-3 0-3-2z" fill="#d9cfd4" />
        <circle cx="14.500" cy="12" r="5.500" fill="#0b78d7" />
        <path d="M12 11q2-3 5 0M17 13q-2 3-5 0" stroke="#fff" strokeWidth="1.300" fill="none" />
      </svg>
      <p className="w-8 mr-5 text-center">ENG<br />IN</p>
      <svg viewBox="0 0 20 16" className="w-5 h-4 mr-2.5" fill="none" stroke="#fff" strokeWidth="1.600">
        <path d="M1 5q9-8 18 0" stroke="#7a555a" /><path d="M3.500 8q6.500-6 13 0M6.500 11q3.500-3.500 7 0" /><circle cx="10" cy="14" r="1.500" fill="#fff" stroke="none" />
      </svg>
      <svg viewBox="0 0 20 18" className="w-5 h-[18px] mr-2.5" fill="none" stroke="#fff" strokeWidth="1.400">
        <path d="M1 6h3l5-4v14l-5-4H1zM11.500 6q2 3 0 6M14 4q4 5 0 10M16.500 1.500q5 7.500 0 15" />
      </svg>
      <svg viewBox="0 0 25 14" className="w-[25px] h-[14px] mr-5" fill="none" stroke="#fff" strokeWidth="1.500">
        <rect x="1" y="1" width="21" height="12" rx="3.500" /><rect x="3.500" y="3.500" width="14" height="7" fill="#fff" stroke="none" /><path d="M23 4q2 3 0 6" />
      </svg>
      <p className="text-right">10:37<br />19-08-2026</p>
    </div>
  </footer>
);

const App = () => {
  const [selected, setSelected] = useState('Nissha Shinde');
  return (
    <div className="flex flex-col h-screen overflow-hidden font-['Inter','Liberation_Sans',sans-serif]">
      <div className="flex flex-1 min-h-0">
        <Sidebar />
        <InboxPanel selected={selected} onSelect={setSelected} />
        <Conversation />
        <div className="w-[9px] shrink-0 bg-[#f8f8f8]">
          <div className="h-[631px] rounded-b-full bg-[#adb4bb]" />
        </div>
      </div>
      <Taskbar />
    </div>
  );
};

export default App;
